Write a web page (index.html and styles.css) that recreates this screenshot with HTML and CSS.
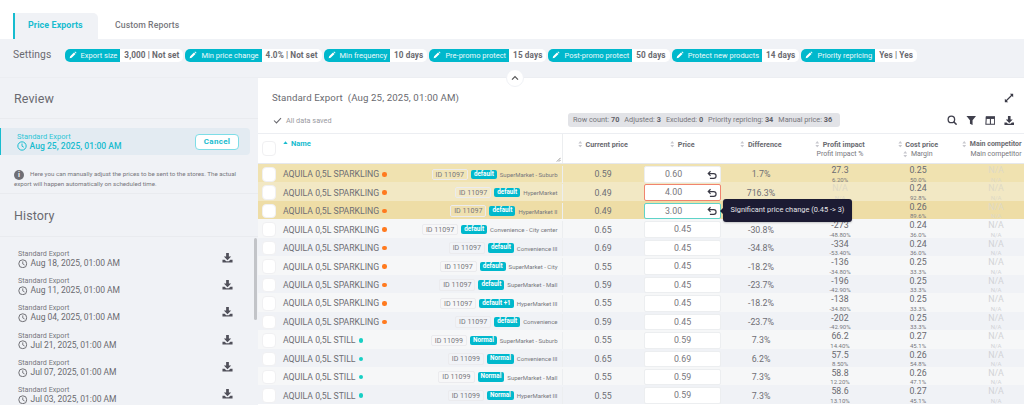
FILE: index.html
```html
<!DOCTYPE html>
<html lang="en">
<head>
<meta charset="utf-8">
<title>Price Exports</title>
<link rel="stylesheet" href="styles.css">
</head>
<body>
<svg class="sprite" aria-hidden="true">
  <symbol id="pencil" viewBox="0 0 24 24"><path d="M2 22l1.500-6L15 4.500l4.500 4.500L8 20.500z M16.500 3l2-1.500 4 4-1.500 2z" fill="currentColor"/></symbol>
  <symbol id="clock" viewBox="0 0 24 24"><circle cx="12" cy="12" r="10" fill="none" stroke="currentColor" stroke-width="2.400"/><path d="M12 6v6.500l4.500 2.500" fill="none" stroke="currentColor" stroke-width="2.200"/></symbol>
  <symbol id="download" viewBox="0 0 24 24"><path d="M9 2h6v8h5l-8 8-8-8h5z M1 17h5l3 3h6l3-3h5v6H1z" fill="currentColor"/></symbol>
  <symbol id="undo" viewBox="0 0 24 24"><path d="M8.500 3L3 8.500l5.500 5.500 M3 8.500h13a5.800 5.800 0 0 1 0 11.600H7" fill="none" stroke="currentColor" stroke-width="2.900"/></symbol>
  <symbol id="sort" viewBox="0 0 8 12"><path d="M4 0l3.500 4.500h-7z M4 12L.5 7.500h7z" fill="currentColor"/></symbol>
</svg>

<nav class="tabs">
  <a class="tab tab-active">Price Exports</a>
  <a class="tab">Custom Reports</a>
</nav>

<section class="settings">
  <span class="settings-title">Settings</span>
  <div class="chip"><span class="chip-label"><svg class="i-pencil"><use href="#pencil"/></svg>Export size</span><span class="chip-value">3,000 | Not set</span></div>
  <div class="chip"><span class="chip-label"><svg class="i-pencil"><use href="#pencil"/></svg>Min price change</span><span class="chip-value">4.0% | Not set</span></div>
  <div class="chip"><span class="chip-label"><svg class="i-pencil"><use href="#pencil"/></svg>Min frequency</span><span class="chip-value">10 days</span></div>
  <div class="chip"><span class="chip-label"><svg class="i-pencil"><use href="#pencil"/></svg>Pre-promo protect</span><span class="chip-value">15 days</span></div>
  <div class="chip"><span class="chip-label"><svg class="i-pencil"><use href="#pencil"/></svg>Post-promo protect</span><span class="chip-value">50 days</span></div>
  <div class="chip"><span class="chip-label"><svg class="i-pencil"><use href="#pencil"/></svg>Protect new products</span><span class="chip-value">14 days</span></div>
  <div class="chip"><span class="chip-label"><svg class="i-pencil"><use href="#pencil"/></svg>Priority repricing</span><span class="chip-value">Yes | Yes</span></div>
  <button class="collapse" aria-label="Collapse"><svg viewBox="0 0 12 8"><path d="M1.500 6.500L6 2l4.500 4.500" fill="none" stroke="currentColor" stroke-width="1.800"/></svg></button>
</section>

<div class="layout">
  <aside class="side">
    <h2 class="side-title">Review</h2>
    <div class="current">
      <div class="current-text">
        <div class="current-name">Standard Export</div>
        <div class="current-date"><svg class="i-clock"><use href="#clock"/></svg>Aug 25, 2025, 01:00 AM</div>
      </div>
      <button class="cancel">Cancel</button>
    </div>
    <p class="info"><span class="info-i">i</span>Here you can manually adjust the prices to be sent to the stores. The actual export will happen automatically on scheduled time.</p>
    <h2 class="side-title history-title">History</h2>
    <div class="history">
      <div class="h-item"><div><div class="h-name">Standard Export</div><div class="h-date"><svg class="i-clock"><use href="#clock"/></svg>Aug 18, 2025, 01:00 AM</div></div><svg class="i-dl"><use href="#download"/></svg></div>
      <div class="h-item"><div><div class="h-name">Standard Export</div><div class="h-date"><svg class="i-clock"><use href="#clock"/></svg>Aug 11, 2025, 01:00 AM</div></div><svg class="i-dl"><use href="#download"/></svg></div>
      <div class="h-item"><div><div class="h-name">Standard Export</div><div class="h-date"><svg class="i-clock"><use href="#clock"/></svg>Aug 04, 2025, 01:00 AM</div></div><svg class="i-dl"><use href="#download"/></svg></div>
      <div class="h-item"><div><div class="h-name">Standard Export</div><div class="h-date"><svg class="i-clock"><use href="#clock"/></svg>Jul 21, 2025, 01:00 AM</div></div><svg class="i-dl"><use href="#download"/></svg></div>
      <div class="h-item"><div><div class="h-name">Standard Export</div><div class="h-date"><svg class="i-clock"><use href="#clock"/></svg>Jul 07, 2025, 01:00 AM</div></div><svg class="i-dl"><use href="#download"/></svg></div>
      <div class="h-item"><div><div class="h-name">Standard Export</div><div class="h-date"><svg class="i-clock"><use href="#clock"/></svg>Jul 03, 2025, 01:00 AM</div></div><svg class="i-dl"><use href="#download"/></svg></div>
      <div class="scrollbar"></div>
    </div>
  </aside>

  <main class="main">
    <div class="main-head">
      <div class="title-row">
        <h1 class="main-title">Standard Export&nbsp; (Aug 25, 2025, 01:00 AM)</h1>
        <svg class="i-expand" viewBox="0 0 12 12"><path d="M7 1h4v4L9.500 3.500 3.500 9.500 5 11H1V7l1.500 1.500 6-6z" fill="currentColor"/></svg>
      </div>
      <div class="status-row">
        <svg class="i-check" viewBox="0 0 12 10"><path d="M1 5l3.500 3.500L11 1.500" fill="none" stroke="currentColor" stroke-width="1.500"/></svg>
        <span class="saved">All data saved</span>
        <div class="stats">Row count: <b>70</b><span>Adjusted: <b>3</b></span><span>Excluded: <b>0</b></span><span>Priority repricing: <b>34</b></span><span>Manual price: <b>36</b></span></div>
        <div class="tools">
          <svg viewBox="0 0 12 12"><circle cx="5" cy="5" r="3.700" fill="none" stroke="currentColor" stroke-width="1.500"/><path d="M7.700 7.700L11 11" stroke="currentColor" stroke-width="1.800"/></svg>
          <svg viewBox="0 0 12 12"><path d="M.5 1h11L7.500 6v5.500l-3-1.500V6z" fill="currentColor"/></svg>
          <svg viewBox="0 0 12 12"><path d="M1.500 2h9.500v8.500H1z M6.200 4v6" fill="none" stroke="currentColor" stroke-width="1.200"/><path d="M1 2h10v2.500H1z" fill="currentColor"/></svg>
          <svg><use href="#download"/></svg>
        </div>
      </div>
    </div>

    <div class="table">
      <div class="row head">
        <div class="c-name"><span class="check"></span><span class="th-name"><svg class="sort-up" viewBox="0 0 8 5"><path d="M4 0l3.500 4.500h-7z" fill="currentColor"/></svg>Name</span><svg class="grip" viewBox="0 0 6 6"><path d="M5.500 1L1 5.500 M5.500 3.500L3.500 5.500" stroke="currentColor" stroke-width=".8"/></svg></div>
        <div class="c"><div class="th"><svg class="i-sort"><use href="#sort"/></svg>Current price</div></div>
        <div class="c"><div class="th"><svg class="i-sort"><use href="#sort"/></svg>Price</div></div>
        <div class="c"><div class="th"><svg class="i-sort"><use href="#sort"/></svg>Difference</div></div>
        <div class="c"><div class="th"><svg class="i-sort"><use href="#sort"/></svg>Profit impact</div><div class="th2">Profit impact %</div></div>
        <div class="c"><div class="th"><svg class="i-sort"><use href="#sort"/></svg>Cost price</div><div class="th2"><svg class="i-sort"><use href="#sort"/></svg>Margin</div></div>
        <div class="c"><div class="th th-last"><svg class="i-sort"><use href="#sort"/></svg>Main competitor</div><div class="th2">Main competitor</div></div>
      </div>

      <div class="row y1">
        <div class="c-name"><span class="check"></span><span class="p">AQUILA 0,5L SPARKLING</span><i class="dot orange"></i><span class="id">ID 11097</span><span class="badge">default</span><span class="store">SuperMarket - Suburb</span></div>
        <div class="c v">0.59</div>
        <div class="c"><div class="price edited">0.60<svg class="i-undo"><use href="#undo"/></svg></div></div>
        <div class="c v">1.7%</div>
        <div class="c"><div class="big">27.3</div><div class="small">6.20%</div></div>
        <div class="c"><div class="big">0.25</div><div class="small">50.0%</div></div>
        <div class="c na"><div class="big">N/A</div><div class="small">N/A</div></div>
      </div>
      <div class="row y2">
        <div class="c-name"><span class="check"></span><span class="p">AQUILA 0,5L SPARKLING</span><i class="dot orange"></i><span class="id">ID 11097</span><span class="badge">default</span><span class="store">HyperMarket</span></div>
        <div class="c v">0.49</div>
        <div class="c"><div class="price edited err">4.00<svg class="i-undo"><use href="#undo"/></svg></div></div>
        <div class="c v">716.3%</div>
        <div class="c na"><div class="big">N/A</div><div class="small">N/A</div></div>
        <div class="c"><div class="big">0.24</div><div class="small">92.8%</div></div>
        <div class="c na"><div class="big">N/A</div><div class="small">N/A</div></div>
      </div>
      <div class="row y3">
        <div class="c-name"><span class="check"></span><span class="p">AQUILA 0,5L SPARKLING</span><i class="dot orange"></i><span class="id">ID 11097</span><span class="badge">default</span><span class="store">HyperMarket II</span></div>
        <div class="c v">0.49</div>
        <div class="c tip-host"><div class="price edited ok">3.00<svg class="i-undo"><use href="#undo"/></svg></div><div class="tooltip">Significant price change (0.45 -&gt; 3)</div></div>
        <div class="c v"></div>
        <div class="c na"></div>
        <div class="c"><div class="big">0.26</div><div class="small">89.6%</div></div>
        <div class="c na"><div class="big">N/A</div><div class="small">N/A</div></div>
      </div>
      <div class="row">
        <div class="c-name"><span class="check"></span><span class="p">AQUILA 0,5L SPARKLING</span><i class="dot orange"></i><span class="id">ID 11097</span><span class="badge">default</span><span class="store">Convenience - City center</span></div>
        <div class="c v">0.65</div>
        <div class="c"><div class="price">0.45</div></div>
        <div class="c v">-30.8%</div>
        <div class="c"><div class="big">-273</div><div class="small">-48.80%</div></div>
        <div class="c"><div class="big">0.24</div><div class="small">36.0%</div></div>
        <div class="c na"><div class="big">N/A</div><div class="small">N/A</div></div>
      </div>
      <div class="row alt">
        <div class="c-name"><span class="check"></span><span class="p">AQUILA 0,5L SPARKLING</span><i class="dot orange"></i><span class="id">ID 11097</span><span class="badge">default</span><span class="store">Convenience III</span></div>
        <div class="c v">0.69</div>
        <div class="c"><div class="price">0.45</div></div>
        <div class="c v">-34.8%</div>
        <div class="c"><div class="big">-334</div><div class="small">-53.40%</div></div>
        <div class="c"><div class="big">0.24</div><div class="small">36.0%</div></div>
        <div class="c na"><div class="big">N/A</div><div class="small">N/A</div></div>
      </div>
      <div class="row">
        <div class="c-name"><span class="check"></span><span class="p">AQUILA 0,5L SPARKLING</span><i class="dot orange"></i><span class="id">ID 11097</span><span class="badge">default</span><span class="store">SuperMarket - City</span></div>
        <div class="c v">0.55</div>
        <div class="c"><div class="price">0.45</div></div>
        <div class="c v">-18.2%</div>
        <div class="c"><div class="big">-136</div><div class="small">-34.80%</div></div>
        <div class="c"><div class="big">0.25</div><div class="small">33.3%</div></div>
        <div class="c na"><div class="big">N/A</div><div class="small">N/A</div></div>
      </div>
      <div class="row alt">
        <div class="c-name"><span class="check"></span><span class="p">AQUILA 0,5L SPARKLING</span><i class="dot orange"></i><span class="id">ID 11097</span><span class="badge">default</span><span class="store">SuperMarket - Mall</span></div>
        <div class="c v">0.59</div>
        <div class="c"><div class="price">0.45</div></div>
        <div class="c v">-23.7%</div>
        <div class="c"><div class="big">-196</div><div class="small">-42.90%</div></div>
        <div class="c"><div class="big">0.25</div><div class="small">33.3%</div></div>
        <div class="c na"><div class="big">N/A</div><div class="small">N/A</div></div>
      </div>
      <div class="row">
        <div class="c-name"><span class="check"></span><span class="p">AQUILA 0,5L SPARKLING</span><i class="dot orange"></i><span class="id">ID 11097</span><span class="badge">default +1</span><span class="store">HyperMarket III</span></div>
        <div class="c v">0.55</div>
        <div class="c"><div class="price">0.45</div></div>
        <div class="c v">-18.2%</div>
        <div class="c"><div class="big">-138</div><div class="small">-34.80%</div></div>
        <div class="c"><div class="big">0.25</div><div class="small">33.3%</div></div>
        <div class="c na"><div class="big">N/A</div><div class="small">N/A</div></div>
      </div>
      <div class="row alt">
        <div class="c-name"><span class="check"></span><span class="p">AQUILA 0,5L SPARKLING</span><i class="dot orange"></i><span class="id">ID 11097</span><span class="badge">default</span><span class="store">Convenience</span></div>
        <div class="c v">0.59</div>
        <div class="c"><div class="price">0.45</div></div>
        <div class="c v">-23.7%</div>
        <div class="c"><div class="big">-202</div><div class="small">-42.90%</div></div>
        <div class="c"><div class="big">0.25</div><div class="small">33.3%</div></div>
        <div class="c na"><div class="big">N/A</div><div class="small">N/A</div></div>
      </div>
      <div class="row">
        <div class="c-name"><span class="check"></span><span class="p">AQUILA 0,5L STILL</span><i class="dot teal"></i><span class="id">ID 11099</span><span class="badge">Normal</span><span class="store">SuperMarket - Suburb</span></div>
        <div class="c v">0.55</div>
        <div class="c"><div class="price">0.59</div></div>
        <div class="c v">7.3%</div>
        <div class="c"><div class="big">66.2</div><div class="small">14.40%</div></div>
        <div class="c"><div class="big">0.27</div><div class="small">45.1%</div></div>
        <div class="c na"><div class="big">N/A</div><div class="small">N/A</div></div>
      </div>
      <div class="row alt">
        <div class="c-name"><span class="check"></span><span class="p">AQUILA 0,5L STILL</span><i class="dot teal"></i><span class="id">ID 11099</span><span class="badge">Normal</span><span class="store">Convenience III</span></div>
        <div class="c v">0.65</div>
        <div class="c"><div class="price">0.69</div></div>
        <div class="c v">6.2%</div>
        <div class="c"><div class="big">57.5</div><div class="small">8.50%</div></div>
        <div class="c"><div class="big">0.26</div><div class="small">54.8%</div></div>
        <div class="c na"><div class="big">N/A</div><div class="small">N/A</div></div>
      </div>
      <div class="row">
        <div class="c-name"><span class="check"></span><span class="p">AQUILA 0,5L STILL</span><i class="dot teal"></i><span class="id">ID 11099</span><span class="badge">Normal</span><span class="store">SuperMarket - Mall</span></div>
        <div class="c v">0.55</div>
        <div class="c"><div class="price">0.59</div></div>
        <div class="c v">7.3%</div>
        <div class="c"><div class="big">58.8</div><div class="small">12.20%</div></div>
        <div class="c"><div class="big">0.26</div><div class="small">47.1%</div></div>
        <div class="c na"><div class="big">N/A</div><div class="small">N/A</div></div>
      </div>
      <div class="row alt">
        <div class="c-name"><span class="check"></span><span class="p">AQUILA 0,5L STILL</span><i class="dot teal"></i><span class="id">ID 11099</span><span class="badge">Normal</span><span class="store">HyperMarket III</span></div>
        <div class="c v">0.55</div>
        <div class="c"><div class="price">0.59</div></div>
        <div class="c v">7.3%</div>
        <div class="c"><div class="big">58.6</div><div class="small">13.10%</div></div>
        <div class="c"><div class="big">0.27</div><div class="small">45.1%</div></div>
        <div class="c na"><div class="big">N/A</div><div class="small">N/A</div></div>
      </div>
    </div>
  </main>
</div>
</body>
</html>
```

FILE: styles.css
```css
* { box-sizing: border-box; }
html, body { margin: 0; height: 405px; overflow: hidden; }
body { font-family: Roboto, "Liberation Sans", sans-serif; color: #6a6a70; background: #fff; font-size: 9px; }
.sprite { position: absolute; width: 0; height: 0; }

/* tabs */
.tabs { height: 39px; padding: 13px 0 0 13px; display: flex; background: #fff; }
.tab { width: 98px; padding-left: 17px; line-height: 25px; font-size: 8.700px; font-weight: 500; color: #77777d; white-space: nowrap; letter-spacing: .1px; }
.tab-active { width: 85px; padding-left: 13px; background: #f0f2f6; border-left: 2px solid #17bccf; border-top-right-radius: 5px; color: #17bccf; font-size: 8.900px; font-weight: 700; }

/* settings */
.settings { position: relative; height: 39px; background: #f0f2f6; display: flex; align-items: flex-start; padding: 10px 0 0 13px; border-bottom: 1px solid #eceef2; }
.settings-title { width: 51.500px; font-size: 10.300px; line-height: 12px; color: #6a6a70; letter-spacing: .1px; }
.chip { display: flex; height: 12.500px; background: #fff; border-radius: 5px; margin-right: 2px; white-space: nowrap; }
.chip-label { display: flex; align-items: center; background: #00b8cc; color: #eefafc; font-size: 7.500px; border-radius: 5px 0 0 5px; padding: 0 3px 0 4px; }
.i-pencil { width: 8px; height: 8px; color: #fff; margin-right: 4px; }
.chip-value { font-size: 8.200px; font-weight: 700; color: #6a6a70; line-height: 12.500px; padding: 0 4px; letter-spacing: .1px; }
.collapse { position: absolute; left: 506px; top: 30px; width: 18px; height: 18px; padding: 0; border: 1px solid #f0f2f6; border-radius: 50%; background: #fff; color: #555; display: flex; align-items: center; justify-content: center; z-index: 2; }
.collapse svg { width: 8px; height: 6px; }

.layout { display: flex; height: 327px; }

/* side */
.side { width: 258px; background: #f0f2f6; flex: none; }
.side-title { margin: 0; height: 41px; padding: 13px 0 0 14px; font-size: 12.500px; line-height: 16px; font-weight: 400; color: #6a6a70; border-bottom: 1px solid #e9ebef; letter-spacing: .1px; }
.current { margin-top: 9px; width: 250px; height: 27px; display: flex; align-items: center; justify-content: space-between; padding: 0 11px 0 16px; background: #e3ebf2; border-left: 1.500px solid #17bccf; border-radius: 0 4px 4px 0; }
.current-name { font-size: 7.500px; line-height: 9px; color: #2cc6d6; }
.current-date { display: flex; align-items: center; font-size: 8.600px; font-weight: 500; line-height: 11px; color: #17bccf; }
.i-clock { width: 10px; height: 10px; margin-right: 2.500px; flex: none; }
.cancel { width: 44px; height: 16px; padding: 0; background: #fff; border: 1px solid #7edde7; border-radius: 4px; color: #17bccf; font: 700 8px Roboto, sans-serif; letter-spacing: .3px; }
.info { margin: 0; height: 39px; padding: 15px 14px 0 14px; font-size: 6.200px; line-height: 9px; color: #77777d; border-bottom: 1px solid #e9ebef; }
.info-i { display: inline-block; width: 10px; height: 10px; margin-right: 6px; border-radius: 50%; background: #6f6f75; color: #f0f2f6; font-size: 7.500px; font-weight: 700; line-height: 10px; text-align: center; vertical-align: -1px; }
.history-title { height: 43px; padding-top: 14px; }
.history { position: relative; padding: 12px 0 0 18px; }
.h-item { height: 27.200px; display: flex; justify-content: space-between; width: 220px; }
.h-name { font-size: 7.200px; line-height: 9px; color: #77777d; }
.h-date { display: flex; align-items: center; font-size: 8.500px; line-height: 11px; color: #6a6a70; }
.h-date .i-clock { width: 9.500px; height: 9.500px; margin-right: 3px; }
.i-dl { width: 11px; height: 11px; color: #50505a; margin-top: 3px; margin-right: 5px; }
.scrollbar { position: absolute; right: 1px; top: 1px; width: 3px; height: 82px; background: #c2c4c8; border-radius: 2px; }

/* main */
.main { flex: 1; min-width: 0; background: #fff; overflow: hidden; }
.main-head { height: 56px; border-bottom: 1px solid #eceef2; }
.title-row { height: 28px; display: flex; justify-content: space-between; padding: 12.500px 10px 0 14px; }
.main-title { margin: 0; font-size: 9.700px; font-weight: 400; line-height: 14px; color: #6a6a70; letter-spacing: .1px; }
.i-expand { width: 10px; height: 10px; color: #3a3a46; margin-top: 2px; }
.status-row { display: flex; align-items: center; height: 14px; padding: 0 10px 0 15px; margin-top: 7px; }
.i-check { width: 9px; height: 7px; color: #6a6a70; flex: none; }
.saved { margin-left: 4px; width: 282px; flex: none; font-size: 7.300px; color: #9a9aa0; }
.stats { height: 14px; width: 272px; flex: none; padding: 0 5px; background: #e2e3e7; border-radius: 3px; font-size: 7.300px; line-height: 14px; color: #77777d; white-space: nowrap; }
.stats span { margin-left: 5px; }
.stats b { font-weight: 700; color: #5f5f68; }
.tools { margin-left: auto; display: flex; gap: 8.500px; color: #3f3f4c; }
.tools svg { width: 10.500px; height: 10.500px; }

/* table */
.row { display: grid; grid-template-columns: 305px 80px 79px 78px 80px 76px 80px; height: 18.460px; padding-top: 2px; background: #f6f7f8; width: 778px; }
.row.alt { background: #f0f2f6; }
.row.y1 { background: #f0e2b0; }
.row.y2 { background: #f2e8c4; }
.row.y3 { background: #eedda6; }
.row.head { height: 30px; padding-top: 0; background: #fff; border-bottom: 1px solid #e6e8ec; }
.c-name { position: relative; display: flex; align-items: center; padding: 0 4.500px 0 4px; border-right: 1px solid #eceef0; white-space: nowrap; min-width: 0; }
.head .c-name { align-items: flex-start; padding-top: 7px; }
.check { width: 14px; height: 14.500px; flex: none; background: #fff; border: 1px solid #f0f0f2; border-radius: 4px; margin-right: 7px; }
.th-name { display: flex; align-items: flex-start; color: #17bccf; font-size: 7.500px; font-weight: 700; margin-top: -2px; line-height: 9px; }
.sort-up { width: 5px; height: 3.500px; margin: 2px 3px 0 0; color: #17bccf; }
.grip { position: absolute; right: 1px; bottom: 1px; width: 5px; height: 5px; color: #666; }
.p { font-size: 8.700px; color: #6e6e74; }
.dot { width: 4.500px; height: 4.500px; margin-left: 3px; border-radius: 50%; flex: none; margin-right: auto; }
.dot.orange { background: #ff7a1f; }
.dot.teal { background: #17cfc4; }
.id { height: 11.500px; padding: 0 3px; border: 1px solid #ebebee; border-radius: 2px; font-size: 7.100px; line-height: 9.500px; color: #77777d; margin-right: 3px; background: rgba(255,255,255,.1); }
.badge { height: 9.500px; padding: 0 3px; background: #00b8cc; color: #fff; font-size: 6.300px; font-weight: 700; line-height: 9.500px; border-radius: 2px; margin-right: 3px; }
.store { font-size: 6px; color: #77777d; }
.c { position: relative; text-align: center; display: flex; flex-direction: column; justify-content: center; align-items: center; white-space: nowrap; }
.v { font-size: 8.800px; color: #6e6e74; }
.head .c { justify-content: flex-start; padding-top: 6px; }
.th { display: flex; align-items: center; font-size: 7.200px; font-weight: 700; color: #6a6a70; line-height: 9px; }
.th-last { margin-right: 8px; font-size: 7px; }
.th2 { display: flex; align-items: center; font-size: 7px; color: #77777d; line-height: 9.500px; margin-top: .5px; }
.i-sort { width: 4.500px; height: 6.500px; margin-right: 3px; color: #c8c8ce; }
.price { position: relative; width: 77px; height: 16.500px; background: #fff; border: 1px solid #eceef0; border-radius: 2px; text-align: center; line-height: 14.500px; font-size: 8.800px; color: #77777d; }
.price.edited { padding-right: 18px; }
.price.err { border-color: #f0846e; }
.price.ok { border-color: #5fd3c8; }
.i-undo { position: absolute; right: 3px; top: 2.500px; width: 10px; height: 10px; color: #3a3a46; }
.big { font-size: 8.800px; line-height: 9.500px; color: #6a6a70; }
.small { font-size: 6px; line-height: 7px; color: #77777d; }
.na .big, .na .small { color: #d2d3d6; }
.y1 .na .big, .y1 .na .small, .y2 .na .big, .y2 .na .small, .y3 .na .big, .y3 .na .small { color: #ded9c5; }
.tooltip { position: absolute; left: 80px; top: -3.500px; width: 129px; height: 23px; z-index: 5; background: #1c1b33; color: #e6e6ea; border-radius: 3px; font-size: 7.400px; line-height: 22px; text-align: center; box-shadow: 0 1px 2px rgba(0,0,0,.2); }
.tooltip::before { content: ""; position: absolute; left: -3px; top: 9px; border: 3px solid transparent; border-left: 0; border-right-color: #1c1b33; }
```
